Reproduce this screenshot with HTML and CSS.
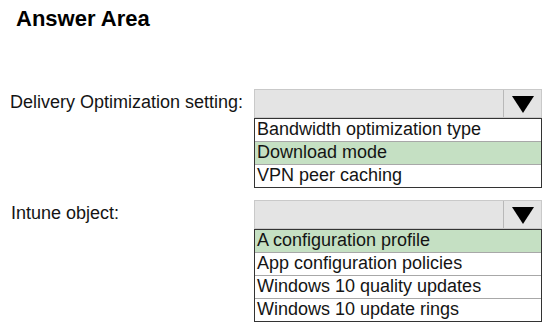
FILE: index.html
```html
<!DOCTYPE html>
<html lang="en">
  <head>
    <meta charset="UTF-8" />
    <title>Answer Area</title>
    <link rel="stylesheet" href="styles.css">
  </head>
  <body>
    <h1 class="title">Answer Area</h1>
    <div class="answers">
      <div class="field">
        <div class="label">Delivery Optimization setting:</div>
        <div class="picker">
          <div class="select">
            <span class="arrow-cell"><span class="arrow"></span></span>
          </div>
          <ul class="options">
            <li>Bandwidth optimization type</li>
            <li class="chosen">Download mode</li>
            <li>VPN peer caching</li>
          </ul>
        </div>
      </div>

      <div class="field second">
        <div class="label">Intune object:</div>
        <div class="picker">
          <div class="select">
            <span class="arrow-cell"><span class="arrow"></span></span>
          </div>
          <ul class="options">
            <li class="chosen">A configuration profile</li>
            <li>App configuration policies</li>
            <li>Windows 10 quality updates</li>
            <li>Windows 10 update rings</li>
          </ul>
        </div>
      </div>
    </div>
  </body>
</html>
```

FILE: styles.css
```css
* {
  box-sizing: border-box;
  font-family: "Liberation Sans", Arial, sans-serif;
}
body {
  margin: 0;
  padding: 0;
  background: #ffffff;
  color: #141414;
}
.title {
  margin: 0;
  padding: 6px 0 0 16px;
  font-size: 22px;
  line-height: 26px;
  font-weight: bold;
  color: #000000;
}
.answers {
  padding: 57px 0 0 10px;
}
.field {
  display: grid;
  grid-template-columns: 244px 288px;
}
.field.second {
  margin-top: 12px;
}
.label {
  font-size: 18px;
  line-height: 22px;
  padding-top: 2px;
}
.field.second .label {
  padding-left: 1px;
}
.select {
  height: 29px;
  background: #e4e4e4;
  border: 1px solid #c9c9c9;
  display: flex;
  justify-content: flex-end;
}
.arrow-cell {
  width: 38px;
  border-left: 1px solid #b8b8b8;
  display: flex;
  align-items: center;
  justify-content: center;
}
.arrow {
  width: 0;
  height: 0;
  border-left: 11px solid transparent;
  border-right: 11px solid transparent;
  border-top: 17px solid #000000;
  margin-top: 2px;
}
.options {
  list-style: none;
  margin: 0;
  padding: 0;
  border: 1px solid #333333;
}
.options li {
  height: 22px;
  font-size: 18px;
  line-height: 20px;
  padding: 0 0 2px 2px;
  white-space: nowrap;
}
.options li + li {
  border-top: 1px solid #a8a8a8;
  height: 23px;
}
.options li.chosen {
  background: #c5e0c3;
}
```
